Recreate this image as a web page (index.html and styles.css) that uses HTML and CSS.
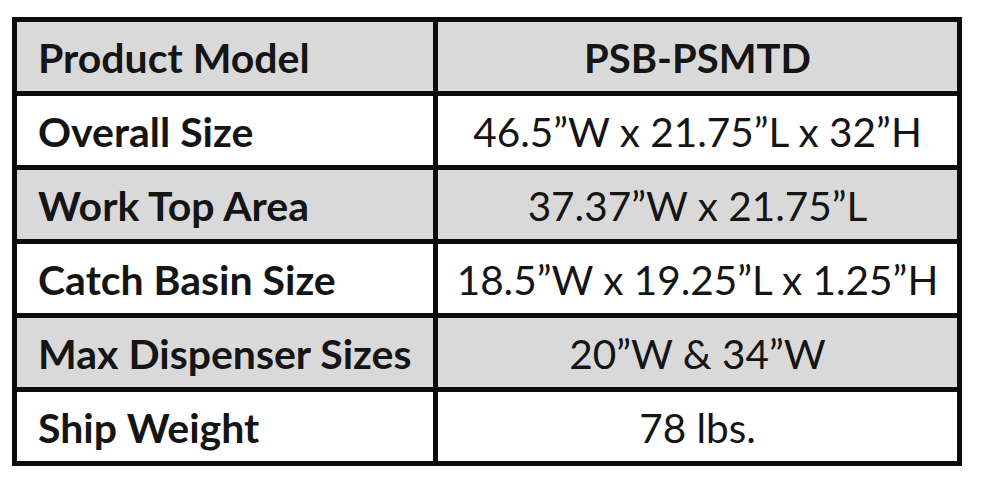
FILE: index.html
```html
<!DOCTYPE html>
<html>
<head>
<meta charset="utf-8">
<link rel="stylesheet" href="styles.css">
</head>
<body>
<div class="spec">
  <div class="cell label shade">Product Model</div>
  <div class="cell value shade strong">PSB-PSMTD</div>
  <div class="cell label">Overall Size</div>
  <div class="cell value">46.5”W x 21.75”L x 32”H</div>
  <div class="cell label shade">Work Top Area</div>
  <div class="cell value shade">37.37”W x 21.75”L</div>
  <div class="cell label">Catch Basin Size</div>
  <div class="cell value">18.5”W x 19.25”L x 1.25”H</div>
  <div class="cell label shade">Max Dispenser Sizes</div>
  <div class="cell value shade">20”W &amp; 34”W</div>
  <div class="cell label">Ship Weight</div>
  <div class="cell value">78 lbs.</div>
</div>
</body>
</html>
```
FILE: styles.css
```css
html, body {
  margin: 0;
  background: #ffffff;
}
body {
  padding: 17px 0 0 12px;
  font-family: Lato, "Open Sans", sans-serif;
  color: #151515;
}
.spec {
  display: grid;
  grid-template-columns: 416px 519px;
  grid-auto-rows: 69px;
  gap: 5px;
  padding: 5px;
  width: max-content;
  background: #0c0c0c;
}
.cell {
  background: #ffffff;
  display: flex;
  align-items: center;
  white-space: nowrap;
  padding-top: 2px;
  box-sizing: border-box;
}
.shade {
  background: #d9d9d9;
}
.label {
  font-weight: 700;
  font-size: 41px;
  padding-left: 21px;
}
.value {
  justify-content: center;
  font-weight: 400;
  font-size: 40.5px;
}
.strong {
  font-weight: 700;
  font-size: 40px;
}
```
